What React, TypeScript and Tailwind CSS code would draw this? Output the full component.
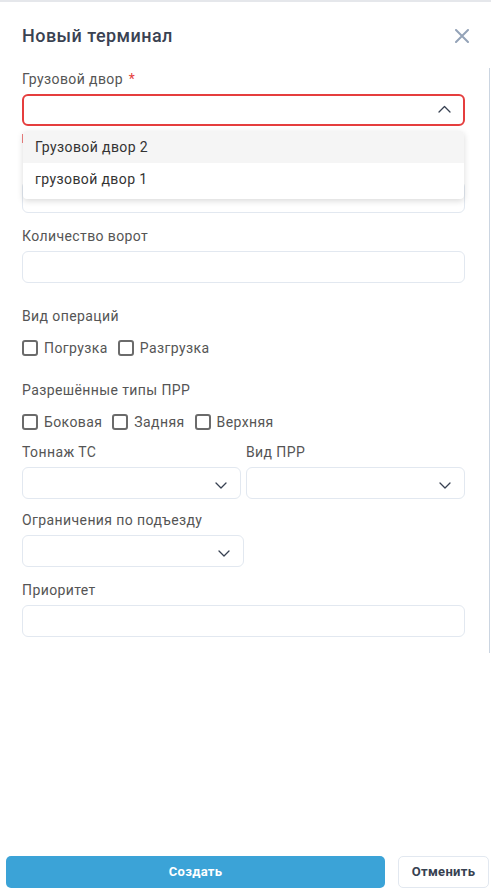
import React from "react";

function ChevronDown() {
  return (
    <svg width="12" height="7" viewBox="0 0 12 7" fill="none" className="absolute right-[13px] top-[14px]">
      <path d="M1 1l5 5 5-5" stroke="#374151" strokeWidth="1.3" strokeLinecap="round" strokeLinejoin="round" />
    </svg>
  );
}

function Checkbox({ label }: { label: string }) {
  return (
    <label className="flex items-center h-5 mr-[10px]">
      <span className="w-4 h-4 border-2 border-[#6b6b6b] rounded-[3px] bg-white mr-[6px]" />
      <span className="text-[14px] text-[#555] tracking-[0.4px]">{label}</span>
    </label>
  );
}

function Label({ children }: { children: React.ReactNode }) {
  return <div className="text-[14px] leading-5 text-[#555] tracking-[0.4px] mb-[5px]">{children}</div>;
}

function Input() {
  return <div className="h-8 border border-[#e2e8f0] rounded-[6px] bg-white" />;
}

export default function App() {
  return (
    <div
      className="w-[491px] h-[894px] bg-white flex flex-col border-t-2 border-[#e5e7eb] relative"
      style={{ fontFamily: "Roboto, 'Noto Sans', Arial, sans-serif" }}
    >
      <div className="flex justify-between pl-[22px] pr-[22px] pt-[22px] h-[66px] items-start">
        <div className="text-[18px] leading-6 font-medium text-[#3a4252] tracking-[0.45px]">Новый терминал</div>
        <svg width="14" height="14" viewBox="0 0 14 14" className="mt-[5px]">
          <path d="M1 1l12 12M13 1L1 13" stroke="#94a3b8" strokeWidth="2" strokeLinecap="round" />
        </svg>
      </div>

      <div className="relative pl-[22px] pr-[24px] pt-[1px] pb-[16px] border-r border-[#cbd5e1] mr-[1px]">
        {/* Field 1 */}
        <div className="text-[14px] leading-5 text-[#555] tracking-[0.4px] mb-[5px]">
          Грузовой двор <span className="text-[#e53e3e] ml-[2px]">*</span>
        </div>
        <div className="h-8 border-2 border-[#e53e3e] rounded-[6px] bg-white relative">
          <svg width="13" height="8" viewBox="0 0 13 8" fill="none" className="absolute right-[12px] top-[9px]">
            <path d="M1 7l5.5-5.5L12 7" stroke="#374151" strokeWidth="1.3" strokeLinecap="round" strokeLinejoin="round" />
          </svg>
        </div>
        <div className="h-[9px] w-[2px] bg-[#f08080] mt-[8px]" />

        {/* Field hidden beneath the dropdown */}
        <div className="mt-[38px]">
          <Input />
        </div>

        {/* Dropdown */}
        <div className="absolute left-[23px] right-[25px] top-[63px] bg-white rounded-[4px] shadow-[0_2px_6px_rgba(0,0,0,0.15)] pb-1 z-10">
          <div className="h-8 bg-[#f5f5f5] flex items-center pl-3 text-[14px] tracking-[0.4px] text-[#333] rounded-t-[4px]">Грузовой двор 2</div>
          <div className="h-8 flex items-center pl-3 text-[14px] tracking-[0.4px] text-[#333]">грузовой двор 1</div>
        </div>

        <div className="mt-[13px]">
          <Label>Количество ворот</Label>
          <Input />
        </div>

        <div className="mt-[23px]">
          <div className="text-[14px] leading-5 text-[#555] tracking-[0.4px]">Вид операций</div>
          <div className="flex mt-[12px]">
            <Checkbox label="Погрузка" />
            <Checkbox label="Разгрузка" />
          </div>
        </div>

        <div className="mt-[22px]">
          <div className="text-[14px] leading-5 text-[#555] tracking-[0.4px]">Разрешённые типы ПРР</div>
          <div className="flex mt-[12px]">
            <Checkbox label="Боковая" />
            <Checkbox label="Задняя" />
            <Checkbox label="Верхняя" />
          </div>
        </div>

        <div className="grid grid-cols-2 gap-[5px] mt-[10px]">
          <div>
            <Label>Тоннаж ТС</Label>
            <div className="h-8 border border-[#e2e8f0] rounded-[6px] bg-white relative">
              <ChevronDown />
            </div>
          </div>
          <div>
            <Label>Вид ПРР</Label>
            <div className="h-8 border border-[#e2e8f0] rounded-[6px] bg-white relative">
              <ChevronDown />
            </div>
          </div>
        </div>

        <div className="mt-[11px]">
          <Label>Ограничения по подъезду</Label>
          <div className="h-8 w-[222px] border border-[#e2e8f0] rounded-[6px] bg-white relative">
            <ChevronDown />
          </div>
        </div>

        <div className="mt-[13px]">
          <Label>Приоритет</Label>
          <Input />
        </div>
      </div>

      <div className="flex-1" />

      <div className="flex items-center pl-[6px] pr-[2px] pb-[6px] gap-[13px]">
        <button className="h-8 flex-1 bg-[#3ba3d7] rounded-[5px] text-white text-[13px] font-bold tracking-[0.3px]">Создать</button>
        <button className="h-8 w-[91px] border border-[#e2e8f0] rounded-[5px] bg-white text-[#374151] text-[13px] font-bold tracking-[0.3px]">
          Отменить
        </button>
      </div>
    </div>
  );
}
